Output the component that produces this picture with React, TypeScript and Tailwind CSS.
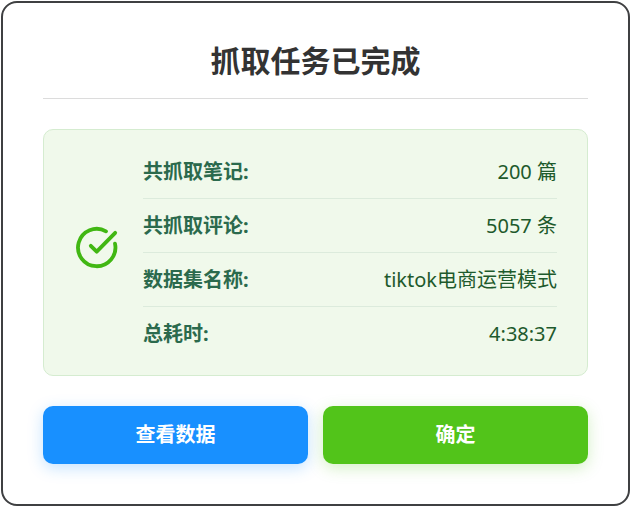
import { useState } from "react";

const rows = [
  { label: "共抓取笔记:", value: "200 篇" },
  { label: "共抓取评论:", value: "5057 条" },
  { label: "数据集名称:", value: "tiktok电商运营模式" },
  { label: "总耗时:", value: "4:38:37" },
];

function CheckIcon() {
  return (
    <svg
      viewBox="0 0 45 45"
      className="h-[45px] w-[45px]"
      fill="none"
      stroke="#41b713"
      strokeWidth="3.8"
      strokeLinecap="round"
      strokeLinejoin="round"
      aria-hidden="true"
    >
      <path d="M32 6.3A18.7 18.7 0 1 0 41 18.6" />
      <path d="M16.8 20.8l5.9 5.9L41.2 7.8" />
    </svg>
  );
}

function Summary() {
  return (
    <div className="mt-[30px] flex items-center gap-6 rounded-[10px] border border-[#d5ecd0] bg-[#f0f9eb] px-[30px] py-[15px]">
      <div className="shrink-0 pb-2.5">
        <CheckIcon />
      </div>
      <dl className="min-w-0 flex-1 text-xl leading-[53px]">
        {rows.map((row) => (
          <div
            key={row.label}
            className="flex justify-between border-b border-[#dcebdc] last:border-b-0"
          >
            <dt className="font-bold text-[#2b6a4d]">{row.label}</dt>
            <dd className="text-[#1e5a2c]">{row.value}</dd>
          </div>
        ))}
      </dl>
    </div>
  );
}

export default function App() {
  const [open, setOpen] = useState(true);

  if (!open) return null;

  return (
    <div className="bg-white p-px font-['Noto_Sans','Noto_Sans_CJK_SC',sans-serif]">
      <div
        role="dialog"
        aria-labelledby="dialog-title"
        className="rounded-2xl border-2 border-[#3f4042] bg-white px-10 pb-10"
      >
        <h1
          id="dialog-title"
          className="border-b border-[#dcdcdc] pt-9 pb-[15px] text-center text-3xl leading-[44px] font-bold text-[#333333]"
        >
          抓取任务已完成
        </h1>
        <Summary />
        <div className="mt-[30px] grid grid-cols-2 gap-[15px] text-xl leading-[58px] font-bold text-white">
          <button
            type="button"
            className="cursor-pointer rounded-[10px] bg-[#1890ff] shadow-[0_4px_15px_rgba(24,144,255,0.25)]"
          >
            查看数据
          </button>
          <button
            type="button"
            onClick={() => setOpen(false)}
            className="cursor-pointer rounded-[10px] bg-[#52c41a] shadow-[0_4px_15px_rgba(82,196,26,0.25)]"
          >
            确定
          </button>
        </div>
      </div>
    </div>
  );
}
